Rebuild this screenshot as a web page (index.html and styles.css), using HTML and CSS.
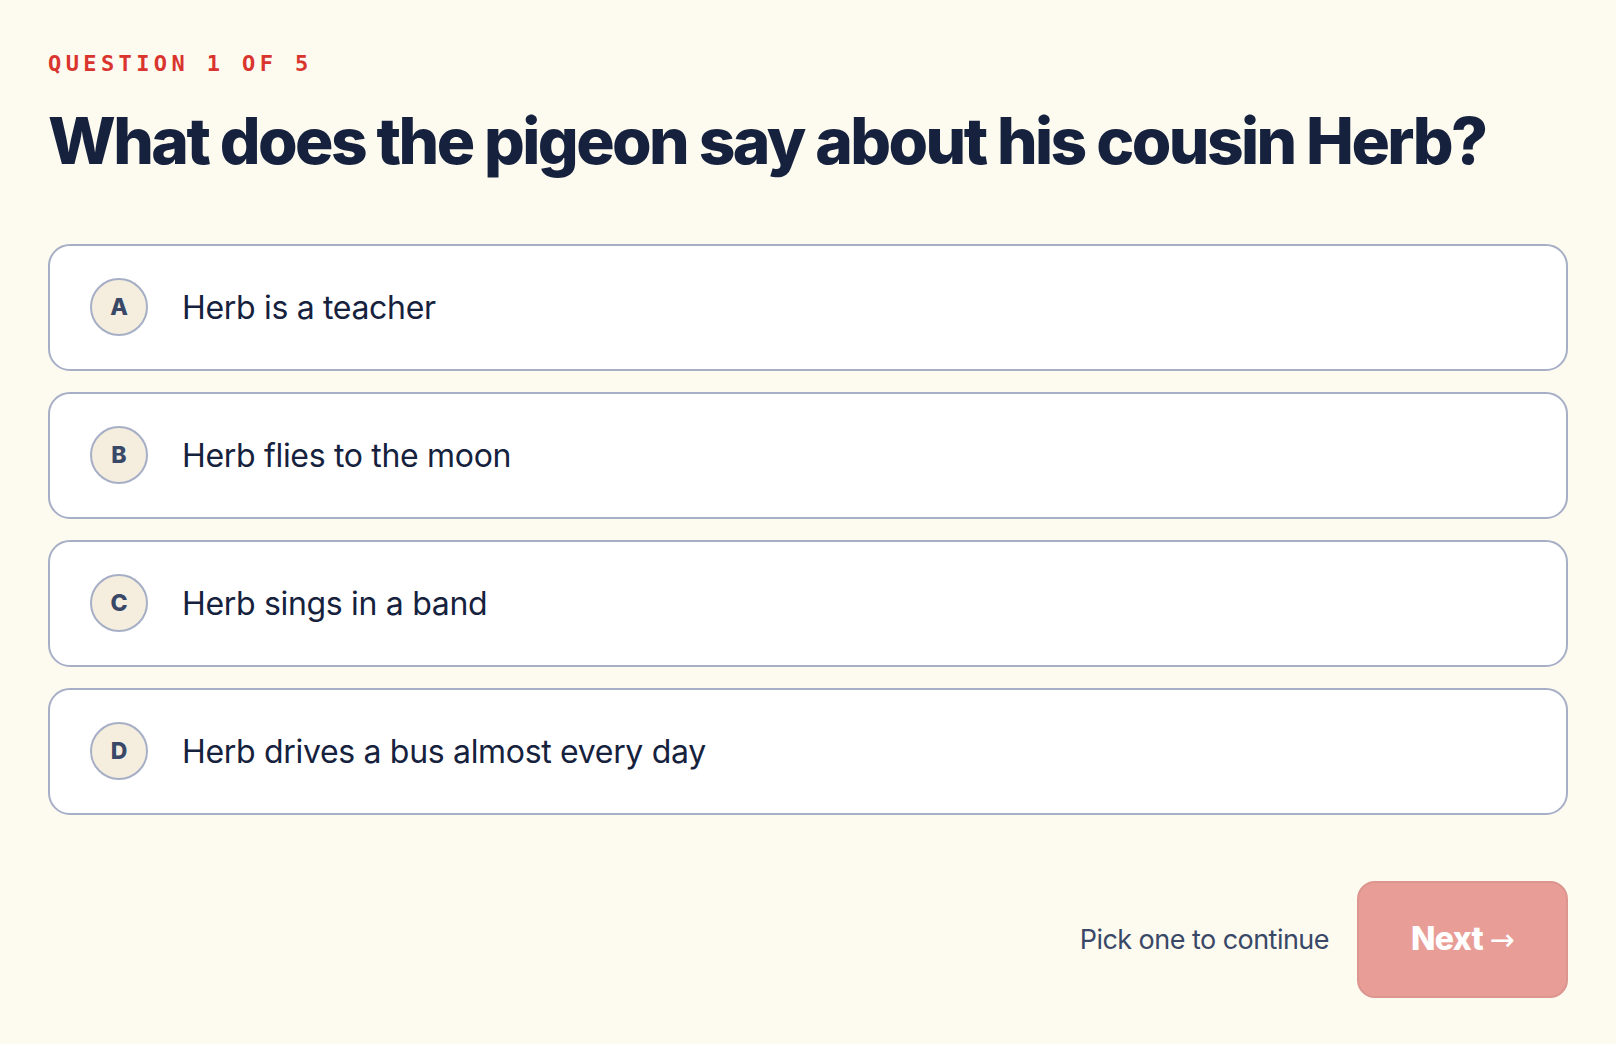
FILE: index.html
```html
<!DOCTYPE html>
<html lang="en">

<head>
  <meta charset="UTF-8" />
  <meta name="viewport" content="width=device-width, initial-scale=1.0" />
  <title>Quiz - Question 1</title>
  <link rel="stylesheet" href="styles.css">
</head>

<body>
  <div class="quiz">
    <div class="quiz-step">Question 1 of 5</div>
    <h1 class="quiz-question">What does the pigeon say about his cousin Herb?</h1>

    <!-- answer options -->
    <div class="options">
      <button class="option" data-key="A">
        <span class="option-key">A</span>
        <span class="option-text">Herb is a teacher</span>
      </button>
      <button class="option" data-key="B">
        <span class="option-key">B</span>
        <span class="option-text">Herb flies to the moon</span>
      </button>
      <button class="option" data-key="C">
        <span class="option-key">C</span>
        <span class="option-text">Herb sings in a band</span>
      </button>
      <button class="option" data-key="D">
        <span class="option-key">D</span>
        <span class="option-text">Herb drives a bus almost every day</span>
      </button>
    </div>

    <div class="quiz-footer">
      <span class="hint">Pick one to continue</span>
      <button class="next-button" disabled>Next <span class="arrow">→</span></button>
    </div>
  </div>
</body>

</html>
```

FILE: styles.css
```css
body {
  font-family: 'Inter', 'Noto Sans', sans-serif;
  margin: 0;
  padding: 0;
  background-color: #fdfaef;
  color: #16223d;
}

.quiz {
  padding: 50px 48px 48px;
}

.quiz-step {
  font-family: 'DejaVu Sans Mono', 'Liberation Mono', monospace;
  font-weight: 700;
  font-size: 22px;
  line-height: 28px;
  letter-spacing: 4.4px;
  text-transform: uppercase;
  color: #d9352e;
}

.quiz-question {
  margin: 28px 0 0 0;
  font-size: 64px;
  line-height: 1.1;
  font-weight: 800;
  letter-spacing: -0.04em;
  color: #16223d;
}

.options {
  display: flex;
  flex-direction: column;
  gap: 21px;
  margin-top: 68px;
}

.option {
  display: flex;
  align-items: center;
  gap: 34px;
  padding: 32px 40px 33px;
  background: white;
  border: 2px solid #a6afc6;
  border-radius: 22px;
  font-family: inherit;
  text-align: left;
  cursor: pointer;
}

.option-key {
  display: flex;
  align-items: center;
  justify-content: center;
  width: 54px;
  height: 54px;
  border: 2px solid #a6afc6;
  border-radius: 50%;
  background: #f5eedf;
  color: #3a4868;
  font-size: 23px;
  font-weight: 800;
  flex-shrink: 0;
}

.option-text {
  font-size: 32px;
  font-weight: 400;
  letter-spacing: -0.01em;
  color: #16223d;
}

.quiz-footer {
  display: flex;
  justify-content: flex-end;
  align-items: center;
  gap: 28px;
  margin-top: 66px;
}

.hint {
  font-size: 27px;
  letter-spacing: -0.02em;
  color: #3a4868;
}

.next-button {
  padding: 38px 52px;
  line-height: 36px;
  background: #e89d97;
  border: 2px solid #dc958f;
  border-radius: 18px;
  color: white;
  font-family: inherit;
  font-size: 32px;
  font-weight: 800;
  letter-spacing: -0.02em;
  cursor: not-allowed;
}

.arrow {
  font-family: 'DejaVu Sans', sans-serif;
  font-weight: 400;
  font-size: 30px;
}
```
